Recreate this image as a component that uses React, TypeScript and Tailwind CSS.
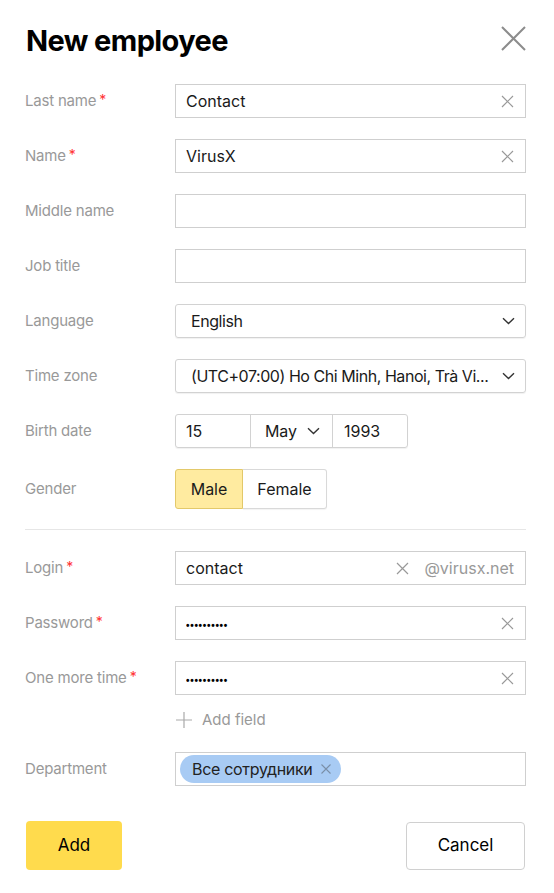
import React from "react";

const font = { fontFamily: "Inter, 'Noto Sans', sans-serif" };

function ClearX({ className = "" }: { className?: string }) {
  return (
    <svg width="13" height="13" viewBox="0 0 13 13" className={className}>
      <path d="M1 1L12 12M12 1L1 12" stroke="#999" strokeWidth="1.2" fill="none" />
    </svg>
  );
}

function Chevron() {
  return (
    <svg width="13" height="8" viewBox="0 0 13 8">
      <path d="M1 1.2L6.5 6.5L12 1.2" stroke="#333" strokeWidth="1.4" fill="none" />
    </svg>
  );
}

function Label({ text, required }: { text: string; required?: boolean }) {
  return (
    <div className="w-[150px] shrink-0 flex items-center text-[15px] text-[#999] tracking-[-0.2px]">
      <span>{text}</span>
      {required && <span className="text-[#ff3333] ml-[3px] text-[14px] -mt-[4px]">*</span>}
    </div>
  );
}

function Row({ children }: { children: React.ReactNode }) {
  return <div className="flex items-center">{children}</div>;
}

function TextInput({ value, clear, suffix, password }: { value?: string; clear?: boolean; suffix?: string; password?: boolean }) {
  return (
    <div className="w-[351px] h-[34px] border border-[#cfcfcf] flex items-center pl-[10px] pr-[11px]">
      <div className="flex-1 overflow-hidden whitespace-nowrap">
        {password ? (
          <span className="text-[10px] tracking-[0.7px] text-black font-bold" style={{ fontFamily: "'Liberation Sans', sans-serif" }}>
            ••••••••••
          </span>
        ) : (
          <span className="text-[16px] text-[#1a1a1a]">{value}</span>
        )}
      </div>
      {clear && <ClearX />}
      {suffix && <span className="ml-[15px] text-[16px] text-[#999]">{suffix}</span>}
    </div>
  );
}

function SelectBox({ value }: { value: string }) {
  return (
    <div className="w-[351px] h-[34px] border border-[#d2d2d2] rounded-[3px] shadow-[0_1px_1px_rgba(0,0,0,0.06)] flex items-center pl-[15px] pr-[10px]">
      <div className="flex-1 overflow-hidden whitespace-nowrap text-[16px] text-[#1a1a1a] tracking-[-0.45px]">{value}</div>
      <Chevron />
    </div>
  );
}

export default function App() {
  return (
    <div className="w-[554px] h-[893px] bg-white pl-[25px]" style={font}>
      <div className="w-[501px]">
        <div className="flex items-start justify-between pt-[23px]">
          <h1 className="text-[29px] leading-[36px] font-bold tracking-[-0.6px] text-black pl-[1px]">New employee</h1>
          <svg width="25" height="25" viewBox="0 0 25 25" className="mt-[3px]">
            <path d="M1 1L24 24M24 1L1 24" stroke="#8c8c8c" strokeWidth="2" fill="none" />
          </svg>
        </div>

        <div className="mt-[25px] flex flex-col gap-[21px]">
          <Row>
            <Label text="Last name" required />
            <TextInput value="Contact" clear />
          </Row>
          <Row>
            <Label text="Name" required />
            <TextInput value="VirusX" clear />
          </Row>
          <Row>
            <Label text="Middle name" />
            <TextInput />
          </Row>
          <Row>
            <Label text="Job title" />
            <TextInput />
          </Row>
          <Row>
            <Label text="Language" />
            <SelectBox value="English" />
          </Row>
          <Row>
            <Label text="Time zone" />
            <SelectBox value="(UTC+07:00) Ho Chi Minh, Hanoi, Trà Vi..." />
          </Row>
          <Row>
            <Label text="Birth date" />
            <div className="flex h-[34px] rounded-[3px] border border-[#d2d2d2] shadow-[0_1px_1px_rgba(0,0,0,0.06)] text-[16px] text-[#1a1a1a]">
              <div className="w-[74px] flex items-center pl-[10px]">15</div>
              <div className="w-[83px] flex items-center justify-center gap-[10px] border-l border-r border-[#d2d2d2] pl-[2px]">
                <span>May</span>
                <Chevron />
              </div>
              <div className="w-[74px] flex items-center pl-[11px]">1993</div>
            </div>
          </Row>
          <Row>
            <Label text="Gender" />
            <div className="flex h-[40px] text-[16px] text-[#1a1a1a]">
              <div className="w-[68px] flex items-center justify-center bg-[#ffeba0] border border-[#e3c96a] rounded-l-[3px]">Male</div>
              <div className="w-[84px] flex items-center justify-center border border-l-0 border-[#d9d9d9] rounded-r-[3px] shadow-[0_1px_1px_rgba(0,0,0,0.05)]">Female</div>
            </div>
          </Row>
        </div>

        <div className="mt-[20px] h-px bg-[#e6e6e6]" />

        <div className="mt-[21px] flex flex-col gap-[21px]">
          <Row>
            <Label text="Login" required />
            <TextInput value="contact" clear suffix="@virusx.net" />
          </Row>
          <Row>
            <Label text="Password" required />
            <TextInput password clear />
          </Row>
          <Row>
            <Label text="One more time" required />
            <TextInput password clear />
          </Row>
        </div>

        <div className="mt-[10px] h-[30px] flex items-center pl-[151px] gap-[10px] text-[15px] text-[#999]">
          <svg width="16" height="16" viewBox="0 0 16 16">
            <path d="M8 0V16M0 8H16" stroke="#aaa" strokeWidth="1.2" fill="none" />
          </svg>
          <span>Add field</span>
        </div>

        <div className="mt-[17px]">
          <Row>
            <Label text="Department" />
            <div className="w-[351px] h-[34px] border border-[#cfcfcf] flex items-center pl-[4px]">
              <div className="h-[28px] rounded-full bg-[#a8cbf4] flex items-center pl-[12px] pr-[10px] gap-[8px] text-[16px] text-[#222] tracking-[-0.3px]">
                <span>Все сотрудники</span>
                <svg width="10" height="10" viewBox="0 0 10 10">
                  <path d="M0.5 0.5L9.5 9.5M9.5 0.5L0.5 9.5" stroke="#7a8fa8" strokeWidth="1.1" fill="none" />
                </svg>
              </div>
            </div>
          </Row>
        </div>

        <div className="mt-[35px] flex justify-between items-center">
          <button className="ml-[1px] w-[96px] h-[49px] rounded-[4px] bg-[#ffdb4d] text-[17px] text-black">Add</button>
          <button className="mr-[1px] w-[119px] h-[48px] rounded-[4px] border border-[#d0d0d0] bg-white text-[17px] text-black">Cancel</button>
        </div>
      </div>
    </div>
  );
}
